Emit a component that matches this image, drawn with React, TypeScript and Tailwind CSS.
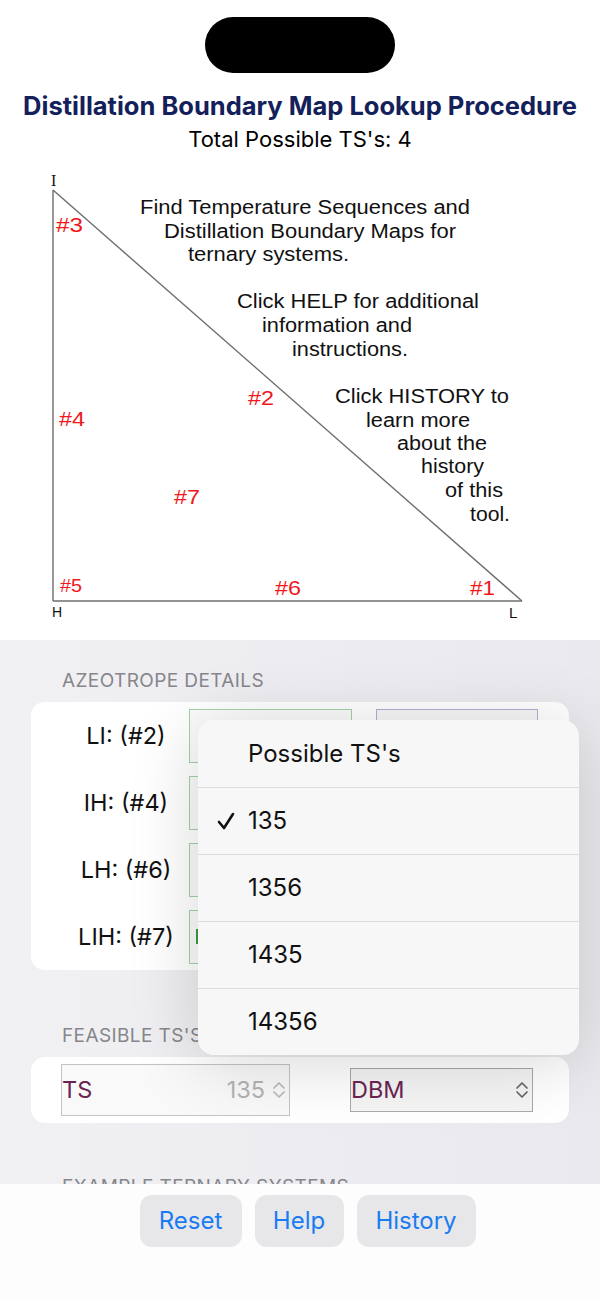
import React from "react";

const noteLines: Array<[string, number, number, number]> = [
  ["Find Temperature Sequences and", 140, 470, 214],
  ["Distillation Boundary Maps for", 164, 456, 238],
  ["ternary systems.", 188, 349, 261],
  ["Click HELP for additional", 237, 479, 308],
  ["information and", 262, 412, 332],
  ["instructions.", 292, 408, 356],
  ["Click HISTORY to", 335, 509, 403],
  ["learn more", 366, 470, 427],
  ["about the", 397, 487, 450],
  ["history", 421, 484, 473],
  ["of this", 445, 503, 497],
  ["tool.", 470, 510, 521],
];

// region markers on the map: label, x, baseline, width
const regions: Array<[string, number, number, number]> = [
  ["#3", 56, 232, 27],
  ["#4", 59, 426, 26],
  ["#2", 248, 405, 26],
  ["#7", 174, 504, 26],
  ["#5", 60, 592, 22],
  ["#6", 275, 595, 26],
  ["#1", 470, 595, 25],
];

function TernaryMap() {
  return (
    <svg width="600" height="488" viewBox="0 0 600 488" className="block">
      <g transform="translate(0,-152)">
        <g stroke="#6e6e6e" strokeWidth="1.4" fill="none">
          <line x1="53" y1="190" x2="53" y2="601" />
          <line x1="53" y1="601" x2="522" y2="601" />
          <line x1="53" y1="190" x2="522" y2="601" />
        </g>
        <text x="51" y="186" fontFamily="'Liberation Serif', serif" fontSize="16" fill="#111">I</text>
        <text x="52" y="617" fontFamily="'Liberation Sans', sans-serif" fontSize="14" fill="#111">H</text>
        <text x="509" y="618" fontFamily="'Liberation Sans', sans-serif" fontSize="15" fill="#111">L</text>
        {noteLines.map(([t, x1, x2, y]) => (
          <text
            key={t}
            x={x1}
            y={y}
            textLength={x2 - x1}
            lengthAdjust="spacingAndGlyphs"
            fontFamily="'Liberation Sans', Arial, sans-serif"
            fontSize="20"
            fill="#111"
          >
            {t}
          </text>
        ))}
        {regions.map(([t, x, y, w]) => (
          <text
            key={t}
            x={x}
            y={y}
            textLength={w}
            lengthAdjust="spacingAndGlyphs"
            fontFamily="'Liberation Sans', Arial, sans-serif"
            fontSize={t === "#5" ? 18 : 20}
            fill="#f0181c"
          >
            {t}
          </text>
        ))}
      </g>
    </svg>
  );
}

function UpDown({ color }: { color: string }) {
  return (
    <svg width="14" height="20" viewBox="0 0 14 20" fill="none" stroke={color} strokeWidth="1.7" strokeLinecap="round" strokeLinejoin="round">
      <path d="M2 8 L7 3 L12 8" />
      <path d="M2 12 L7 17 L12 12" />
    </svg>
  );
}

function CheckMark() {
  return (
    <svg width="18" height="18" viewBox="0 0 18 18" fill="none" stroke="#111" strokeWidth="2.6" strokeLinecap="round" strokeLinejoin="round">
      <path d="M2 10 L7 16 L16 2" />
    </svg>
  );
}

const azeotropes = ["LI: (#2)", "IH: (#4)", "LH: (#6)", "LIH: (#7)"];
const menuItems = ["135", "1356", "1435", "14356"];

export default function App() {
  return (
    <div className="relative h-[1299px] w-[600px] overflow-hidden bg-white font-['Inter',sans-serif]">
      <div className="flex h-[640px] flex-col items-center bg-white">
        <div className="mt-[17px] h-[56px] w-[190px] rounded-full bg-black" />
        <h1 className="mt-[18px] text-[25.5px] font-bold leading-[30px] text-[#13205a]">
          Distillation Boundary Map Lookup Procedure
        </h1>
        <p className="mt-[5px] text-[22px] leading-[26px] text-black">Total Possible TS's: 4</p>
        <TernaryMap />
      </div>

      <div className="h-[544px] overflow-hidden bg-gradient-to-r from-[#f1f1f4] to-[#e9e9ee]">
        <p className="pl-[62px] pt-[30px] text-[19px] leading-[22px] tracking-[0.4px] text-[#86868b]">AZEOTROPE DETAILS</p>
        <div className="mx-[31px] mt-[10px] rounded-[14px] bg-white">
          {azeotropes.map((label, i) => (
            <div key={label} className="flex h-[67px] items-center">
              <div className="w-[159px] pl-[31px] text-center text-[23.5px] text-[#111]">{label}</div>
              <div className="ml-[-1px] flex h-[54px] w-[163px] items-center border border-[#a6d0a6] bg-[#fbfbfb]">
                {i === 3 ? <div className="ml-[6px] h-[15px] w-[2px] bg-[#3f9a3f]" /> : null}
              </div>
              <div className="ml-[24px] h-[54px] w-[162px] border border-[#b0b0d2] bg-[#f7f7f7]" />
              <div className="flex-1" />
            </div>
          ))}
        </div>

        <p className="mt-[55px] pl-[62px] text-[19px] leading-[22px] tracking-[0.4px] text-[#86868b]">FEASIBLE TS'S</p>
        <div className="mx-[31px] mt-[10px] flex h-[66px] items-center rounded-[14px] bg-white">
          <div className="ml-[30px] flex h-[52px] w-[229px] items-center border border-[#c4c4c4] bg-[#f9f9f9]">
            <span className="text-[23.5px] text-[#6b2452]">TS</span>
            <span className="ml-auto text-[23.5px] text-[#b3b3b3]">135</span>
            <span className="ml-[7px] mr-[3px]">
              <UpDown color="#b8b8b8" />
            </span>
          </div>
          <div className="ml-[60px] flex h-[44px] w-[183px] items-center border border-[#a9a9a9] bg-[#f5f5f5]">
            <span className="text-[23.5px] text-[#6b2452]">DBM</span>
            <span className="ml-auto mr-[3px]">
              <UpDown color="#666" />
            </span>
          </div>
        </div>

        <p className="mt-[53px] pl-[62px] text-[19px] leading-[22px] tracking-[0.4px] text-[#86868b]">EXAMPLE TERNARY SYSTEMS</p>
      </div>

      <div className="flex h-[115px] justify-center gap-[13px] bg-[#fdfdfd] pl-[15px] pt-[11px]">
        {[
          ["Reset", "w-[102px]"],
          ["Help", "w-[89px]"],
          ["History", "w-[119px]"],
        ].map(([label, w]) => (
          <button key={label} className={`h-[52px] ${w} rounded-[12px] bg-[#e7e7e9] text-[24px] text-[#1a7cf2]`}>
            {label}
          </button>
        ))}
      </div>

      <div className="absolute left-[198px] top-[720px] w-[381px] overflow-hidden rounded-[16px] bg-[#f7f7f7] shadow-[0_8px_70px_rgba(0,0,0,0.16)]">
        <div className="flex h-[67px] items-center pl-[50px] text-[24px] text-[#111]">Possible TS's</div>
        {menuItems.map((item, i) => (
          <div key={item} className="flex h-[67px] items-center border-t border-[#dcdcdc] text-[24px] text-[#111]">
            <div className="w-[50px] pl-[19px]">{i === 0 ? <CheckMark /> : null}</div>
            <span>{item}</span>
          </div>
        ))}
      </div>
    </div>
  );
}
